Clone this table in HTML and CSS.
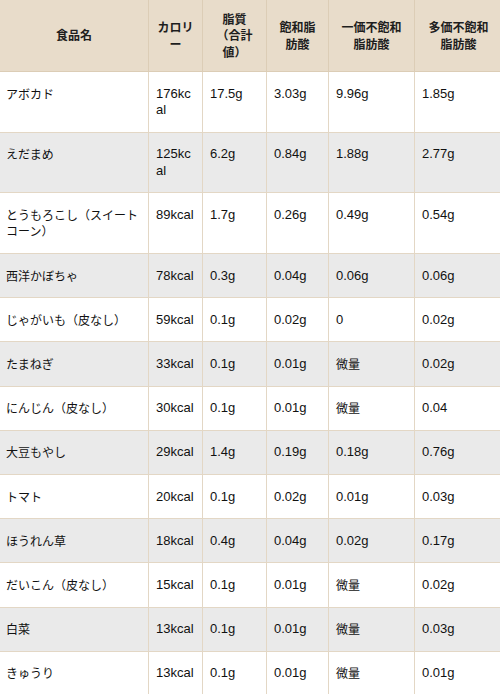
FILE: index.html
```html
<!DOCTYPE html>
<html lang="ja">
<head>
<meta charset="utf-8">
<title>野菜の脂質</title>
<link rel="stylesheet" href="styles.css">
</head>
<body>
<table class="nutri">
  <thead>
    <tr>
      <th class="c-name">食品名</th>
      <th class="c-kcal">カロリー</th>
      <th class="c-fat">脂質<br>（合計値）</th>
      <th class="c-sat">飽和脂<br>肪酸</th>
      <th class="c-mono">一価不飽和<br>脂肪酸</th>
      <th class="c-poly">多価不飽和<br>脂肪酸</th>
    </tr>
  </thead>
  <tbody>
    <tr><td class="name">アボカド</td><td class="kcal">176kcal</td><td>17.5g</td><td>3.03g</td><td>9.96g</td><td>1.85g</td></tr>
    <tr><td class="name">えだまめ</td><td class="kcal">125kcal</td><td>6.2g</td><td>0.84g</td><td>1.88g</td><td>2.77g</td></tr>
    <tr><td class="name">とうもろこし（スイートコーン）</td><td class="kcal">89kcal</td><td>1.7g</td><td>0.26g</td><td>0.49g</td><td>0.54g</td></tr>
    <tr><td class="name">西洋かぼちゃ</td><td class="kcal">78kcal</td><td>0.3g</td><td>0.04g</td><td>0.06g</td><td>0.06g</td></tr>
    <tr><td class="name">じゃがいも（皮なし）</td><td class="kcal">59kcal</td><td>0.1g</td><td>0.02g</td><td>0</td><td>0.02g</td></tr>
    <tr><td class="name">たまねぎ</td><td class="kcal">33kcal</td><td>0.1g</td><td>0.01g</td><td class="ja">微量</td><td>0.02g</td></tr>
    <tr><td class="name">にんじん（皮なし）</td><td class="kcal">30kcal</td><td>0.1g</td><td>0.01g</td><td class="ja">微量</td><td>0.04</td></tr>
    <tr><td class="name">大豆もやし</td><td class="kcal">29kcal</td><td>1.4g</td><td>0.19g</td><td>0.18g</td><td>0.76g</td></tr>
    <tr><td class="name">トマト</td><td class="kcal">20kcal</td><td>0.1g</td><td>0.02g</td><td>0.01g</td><td>0.03g</td></tr>
    <tr><td class="name">ほうれん草</td><td class="kcal">18kcal</td><td>0.4g</td><td>0.04g</td><td>0.02g</td><td>0.17g</td></tr>
    <tr><td class="name">だいこん（皮なし）</td><td class="kcal">15kcal</td><td>0.1g</td><td>0.01g</td><td class="ja">微量</td><td>0.02g</td></tr>
    <tr><td class="name">白菜</td><td class="kcal">13kcal</td><td>0.1g</td><td>0.01g</td><td class="ja">微量</td><td>0.03g</td></tr>
    <tr><td class="name">きゅうり</td><td class="kcal">13kcal</td><td>0.1g</td><td>0.01g</td><td class="ja">微量</td><td>0.01g</td></tr>
  </tbody>
</table>
</body>
</html>
```
FILE: styles.css
```css
html, body {
  margin: 0;
  padding: 0;
  overflow: hidden;
  background: #ffffff;
}

body {
  font-family: "Liberation Sans", "Noto Sans CJK JP", sans-serif;
  color: #111111;
}

.nutri {
  border-collapse: separate;
  border-spacing: 0;
  table-layout: fixed;
  width: 503px;
}

.nutri th,
.nutri td {
  box-sizing: border-box;
  border-right: 1px solid #e3d7c5;
  border-bottom: 1px solid #e3d7c5;
  text-align: left;
  line-height: 16.5px;
}

.nutri th {
  background: #e8dcca;
  font-family: "Noto Sans CJK JP", sans-serif;
  font-size: 12px;
  font-weight: 700;
  color: #1e1e1e;
  text-align: center;
  vertical-align: middle;
  padding: 10.75px 7px;
  border-right-color: #dccdb6;
  border-bottom-color: #dccdb6;
}

.c-name { width: 149px; }
.c-kcal { width: 54px; }
.c-fat  { width: 64px; }
.c-sat  { width: 62px; }
.c-mono { width: 86px; }
.c-poly { width: 88px; }

.nutri td {
  font-size: 13px;
  vertical-align: top;
  padding: 13.6px 7px 13.1px;
}

.nutri tbody tr:nth-child(even) td {
  background: #eaeaea;
}

.nutri td.name {
  font-family: "Noto Sans CJK JP", sans-serif;
  font-size: 12px;
  padding-left: 6px;
}

.nutri td.kcal {
  word-break: break-all;
}

.nutri td.ja {
  font-family: "Noto Sans CJK JP", sans-serif;
  font-size: 12px;
}
```
